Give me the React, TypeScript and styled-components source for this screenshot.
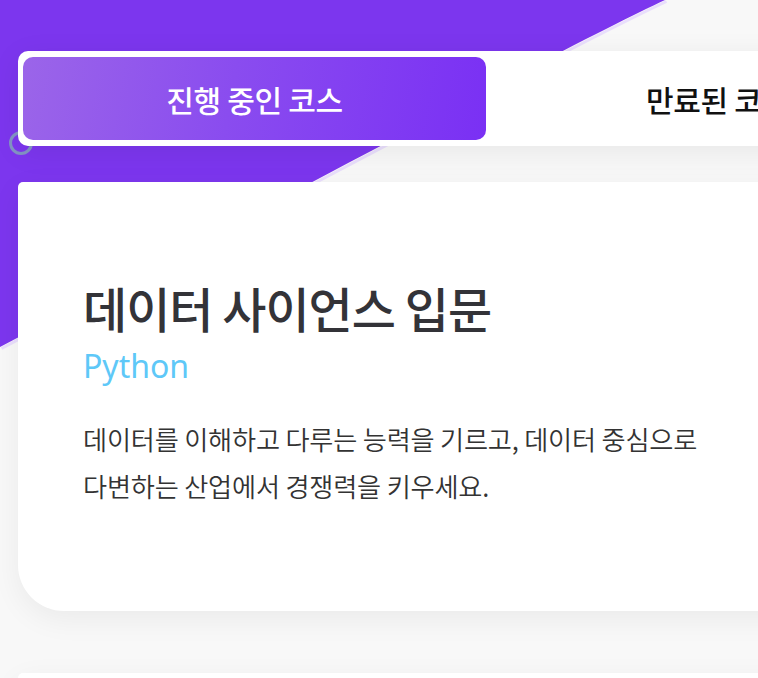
import React from "react";
import styled, { createGlobalStyle } from "styled-components";

const GlobalStyle = createGlobalStyle`
  html, body {
    margin: 0;
    padding: 0;
    background: #f8f8f8;
    overflow: hidden;
  }
  * { box-sizing: border-box; }
`;

const Page = styled.div`
  position: relative;
  width: 758px;
  height: 678px;
  overflow: hidden;
  background: #f8f8f8;
  font-family: "Noto Sans CJK KR", "Noto Sans", sans-serif;
`;

const Wave = styled.svg`
  position: absolute;
  left: 0;
  top: 0;
  width: 758px;
  height: 678px;
  z-index: 0;
`;

const Ring = styled.div`
  position: absolute;
  left: 9px;
  top: 131px;
  width: 24px;
  height: 24px;
  border-radius: 50%;
  border: 3.5px solid #8393c4;
  z-index: 1;
`;

const Content = styled.div`
  position: relative;
  z-index: 2;
  display: flex;
  flex-direction: column;
  padding: 51px 0 0 18px;
`;

const TabBar = styled.div`
  display: flex;
  width: 936px;
  padding: 6px 5px;
  background: #ffffff;
  border-radius: 10px;
  box-shadow: 0 6px 30px rgba(0, 0, 0, 0.07);
`;

const Tab = styled.div<{ $active?: boolean }>`
  flex: 1;
  height: 83px;
  border-radius: 10px;
  display: flex;
  align-items: center;
  justify-content: center;
  font-size: 30px;
  font-weight: 500;
  letter-spacing: -0.3px;
  white-space: nowrap;
  color: ${(p) => (p.$active ? "#ffffff" : "#111111")};
  background: ${(p) =>
    p.$active ? "linear-gradient(100deg, #9b65e9 0%, #8a4cef 45%, #7a30f4 100%)" : "transparent"};
`;

const Card = styled.div<{ $height: number }>`
  margin-top: ${(p) => (p.$height > 100 ? "36px" : "62px")};
  width: 900px;
  height: ${(p) => p.$height}px;
  background: #ffffff;
  border-radius: 5px 5px 5px 46px;
  box-shadow: 0 8px 30px rgba(0, 0, 0, 0.06);
  padding: 95px 0 0 65px;
`;

const Title = styled.h1`
  margin: 0;
  font-size: 48px;
  font-weight: 500;
  line-height: 60px;
  letter-spacing: -1px;
  color: #333338;
`;

const Lang = styled.div`
  margin-top: 7px;
  font-family: "Noto Sans", sans-serif;
  font-size: 32px;
  line-height: 44px;
  color: #5ec8f8;
`;

const Desc = styled.p`
  margin: 28px 0 0;
  width: 660px;
  font-size: 26.2px;
  font-weight: 350;
  line-height: 47px;
  color: #333333;
  letter-spacing: -0.2px;
  word-break: keep-all;
`;

export default function App() {
  return (
    <>
      <GlobalStyle />
      <Page>
        <Wave viewBox="0 0 758 678">
          <path d="M665 0 C600 30 420 125 0 347" fill="none" stroke="#e9defc" strokeWidth="3" transform="translate(1.5 1.5)" />
          <path d="M0 0 L665 0 C600 30 420 125 0 347 Z" fill="#7c36ee" />
        </Wave>
        <Ring />
        <Content>
          <TabBar>
            <Tab $active>진행 중인 코스</Tab>
            <Tab>만료된 코스</Tab>
          </TabBar>
          <Card $height={429}>
            <Title>데이터 사이언스 입문</Title>
            <Lang>Python</Lang>
            <Desc>
              데이터를 이해하고 다루는 능력을 기르고, 데이터 중심으로 다변하는 산업에서 경쟁력을 키우세요.
            </Desc>
          </Card>
          <Card $height={60} />
        </Content>
      </Page>
    </>
  );
}
